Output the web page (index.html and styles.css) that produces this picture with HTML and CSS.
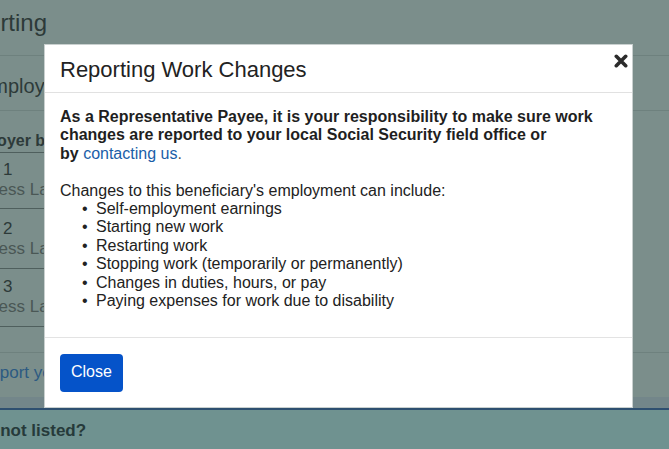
FILE: index.html
```html
<!DOCTYPE html>
<html lang="en">
<head>
<meta charset="utf-8">
<title>Reporting Work Changes</title>
<link rel="stylesheet" href="styles.css">
</head>
<body>
<div class="page">
  <header class="page-head">
    <h1 class="page-title">Reporting</h1>
  </header>
  <section class="section-head">
    <h2 class="section-title">Employment</h2>
  </section>
  <div class="table">
    <div class="thead">Employer business name</div>
    <div class="trow r1"><div class="cell-num">1</div><div class="cell-addr">Business Lane</div></div>
    <div class="trow r2"><div class="cell-num">2</div><div class="cell-addr">Business Lane</div></div>
    <div class="trow r3"><div class="cell-num">3</div><div class="cell-addr">Business Lane</div></div>
  </div>
  <div class="spacer-row"></div>
  <div class="link-row"><a class="bg-link" href="#">Report your changes</a></div>
  <div class="band"></div>
  <div class="not-listed">Employer not listed?</div>
</div>

<div class="modal" role="dialog" aria-labelledby="modal-title">
  <div class="modal-header">
    <h2 class="modal-title" id="modal-title">Reporting Work Changes</h2>
    <button class="modal-x" type="button" aria-label="Close">
      <svg width="14" height="14" viewBox="0 0 14 14" aria-hidden="true">
        <path d="M2.3 2.3 L11.7 11.7 M11.7 2.3 L2.3 11.7" stroke="#2b2b2b" stroke-width="3.6" stroke-linecap="round"/>
      </svg>
    </button>
  </div>
  <div class="modal-body">
    <p class="lead">As a Representative Payee, it is your responsibility to make sure work changes are reported to your local Social Security field office or<br>by <a class="link" href="#">contacting us</a><span class="dot">.</span></p>
    <p class="intro">Changes to this beneficiary's employment can include:</p>
    <ul class="changes">
      <li>Self-employment earnings</li>
      <li>Starting new work</li>
      <li>Restarting work</li>
      <li>Stopping work (temporarily or permanently)</li>
      <li>Changes in duties, hours, or pay</li>
      <li>Paying expenses for work due to disability</li>
    </ul>
  </div>
  <div class="modal-footer">
    <button class="btn-close" type="button">Close</button>
  </div>
</div>
</body>
</html>
```

FILE: styles.css
```css
html, body {
  margin: 0;
  padding: 0;
}
body {
  width: 669px;
  height: 449px;
  overflow: hidden;
  background: #7b8e8b;
  font-family: "Liberation Sans", Arial, sans-serif;
  position: relative;
}
.page {
  color: #2d3a39;
}
.page-head {
  box-sizing: border-box;
  height: 56px;
  border-bottom: 1px solid #6e817e;
}
.page-title {
  margin: 0 0 0 -57px;
  padding-top: 9px;
  font-size: 24px;
  font-weight: normal;
  line-height: 28px;
  white-space: nowrap;
}
.section-head {
  height: 55px;
  box-sizing: border-box;
  border-bottom: 1px solid #6e817e;
}
.section-title {
  margin: 0 0 0 -22px;
  padding-top: 18px;
  font-size: 20px;
  font-weight: normal;
  line-height: 24px;
  white-space: nowrap;
}
.table {
  width: 560px;
}
.thead {
  height: 42px;
  box-sizing: border-box;
  padding: 21px 0 0;
  text-indent: -42px;
  font-size: 16px;
  font-weight: bold;
  line-height: 18px;
  border-bottom: 1px solid #4f5f5d;
  white-space: nowrap;
}
.trow {
  box-sizing: border-box;
  border-bottom: 1px solid #4f5f5d;
  font-size: 17px;
  line-height: 20px;
  white-space: nowrap;
}
.trow.r1 {
  height: 56px;
  padding-top: 7px;
}
.trow.r2 {
  height: 60px;
  padding-top: 10px;
}
.trow.r3 {
  height: 58px;
  padding-top: 8px;
}
.cell-num {
  padding-left: 3px;
}
.cell-addr {
  margin-left: -44px;
  color: #4a5755;
}
.spacer-row {
  height: 25px;
  border-bottom: 1px solid #6e817e;
}
.link-row {
  height: 44px;
  box-sizing: border-box;
  padding-top: 10px;
  text-indent: -22px;
  font-size: 17px;
  line-height: 20px;
  white-space: nowrap;
}
.bg-link {
  color: #2c5a82;
  text-decoration: none;
}
.band {
  height: 11px;
  background: #73868a;
  border-bottom: 2px solid #2e4f70;
}
.not-listed {
  height: 40px;
  box-sizing: border-box;
  background: #6f9290;
  padding-top: 11px;
  text-indent: -82px;
  font-size: 17px;
  font-weight: bold;
  line-height: 20px;
  color: #263a3a;
  white-space: nowrap;
}

/* modal */
.modal {
  position: absolute;
  left: 44px;
  top: 44px;
  width: 589px;
  box-sizing: border-box;
  background: #fff;
  border: 1px solid #c9d0cf;
  color: #222;
}
.modal-header {
  padding: 12px 15px 10px;
  border-bottom: 1px solid #e1e1e1;
}
.modal-title {
  margin: 0;
  font-size: 22px;
  font-weight: normal;
  line-height: 25px;
  color: #222;
}
.modal-x {
  position: absolute;
  top: 8px;
  right: 3px;
  width: 16px;
  height: 16px;
  padding: 1px;
  border: 0;
  background: none;
  display: flex;
  align-items: center;
  justify-content: center;
  cursor: pointer;
}
.modal-body {
  padding: 15px 15px;
  font-size: 16px;
  line-height: 18.4px;
}
.lead {
  margin: 0 0 18.4px;
  font-weight: bold;
  color: #1f1f1f;
}
.link {
  font-weight: normal;
  color: #1a5ea8;
  text-decoration: none;
}
.dot {
  font-weight: normal;
  color: #555;
}
.intro {
  margin: 0;
}
.changes {
  margin: 0 0 12px;
  padding-left: 22px;
  list-style: none;
}
.changes li::before {
  content: "\2022";
  display: inline-block;
  width: 14px;
}
.modal-footer {
  padding: 16px 15px 15px;
  border-top: 1px solid #e3e3e3;
}
.btn-close {
  display: block;
  margin: 0;
  padding: 8px 11px 10px;
  border: 0;
  border-radius: 4px;
  background: #0553c9;
  color: #fff;
  font-family: "Liberation Sans", Arial, sans-serif;
  font-size: 16px;
  line-height: 20px;
  cursor: pointer;
}
```
